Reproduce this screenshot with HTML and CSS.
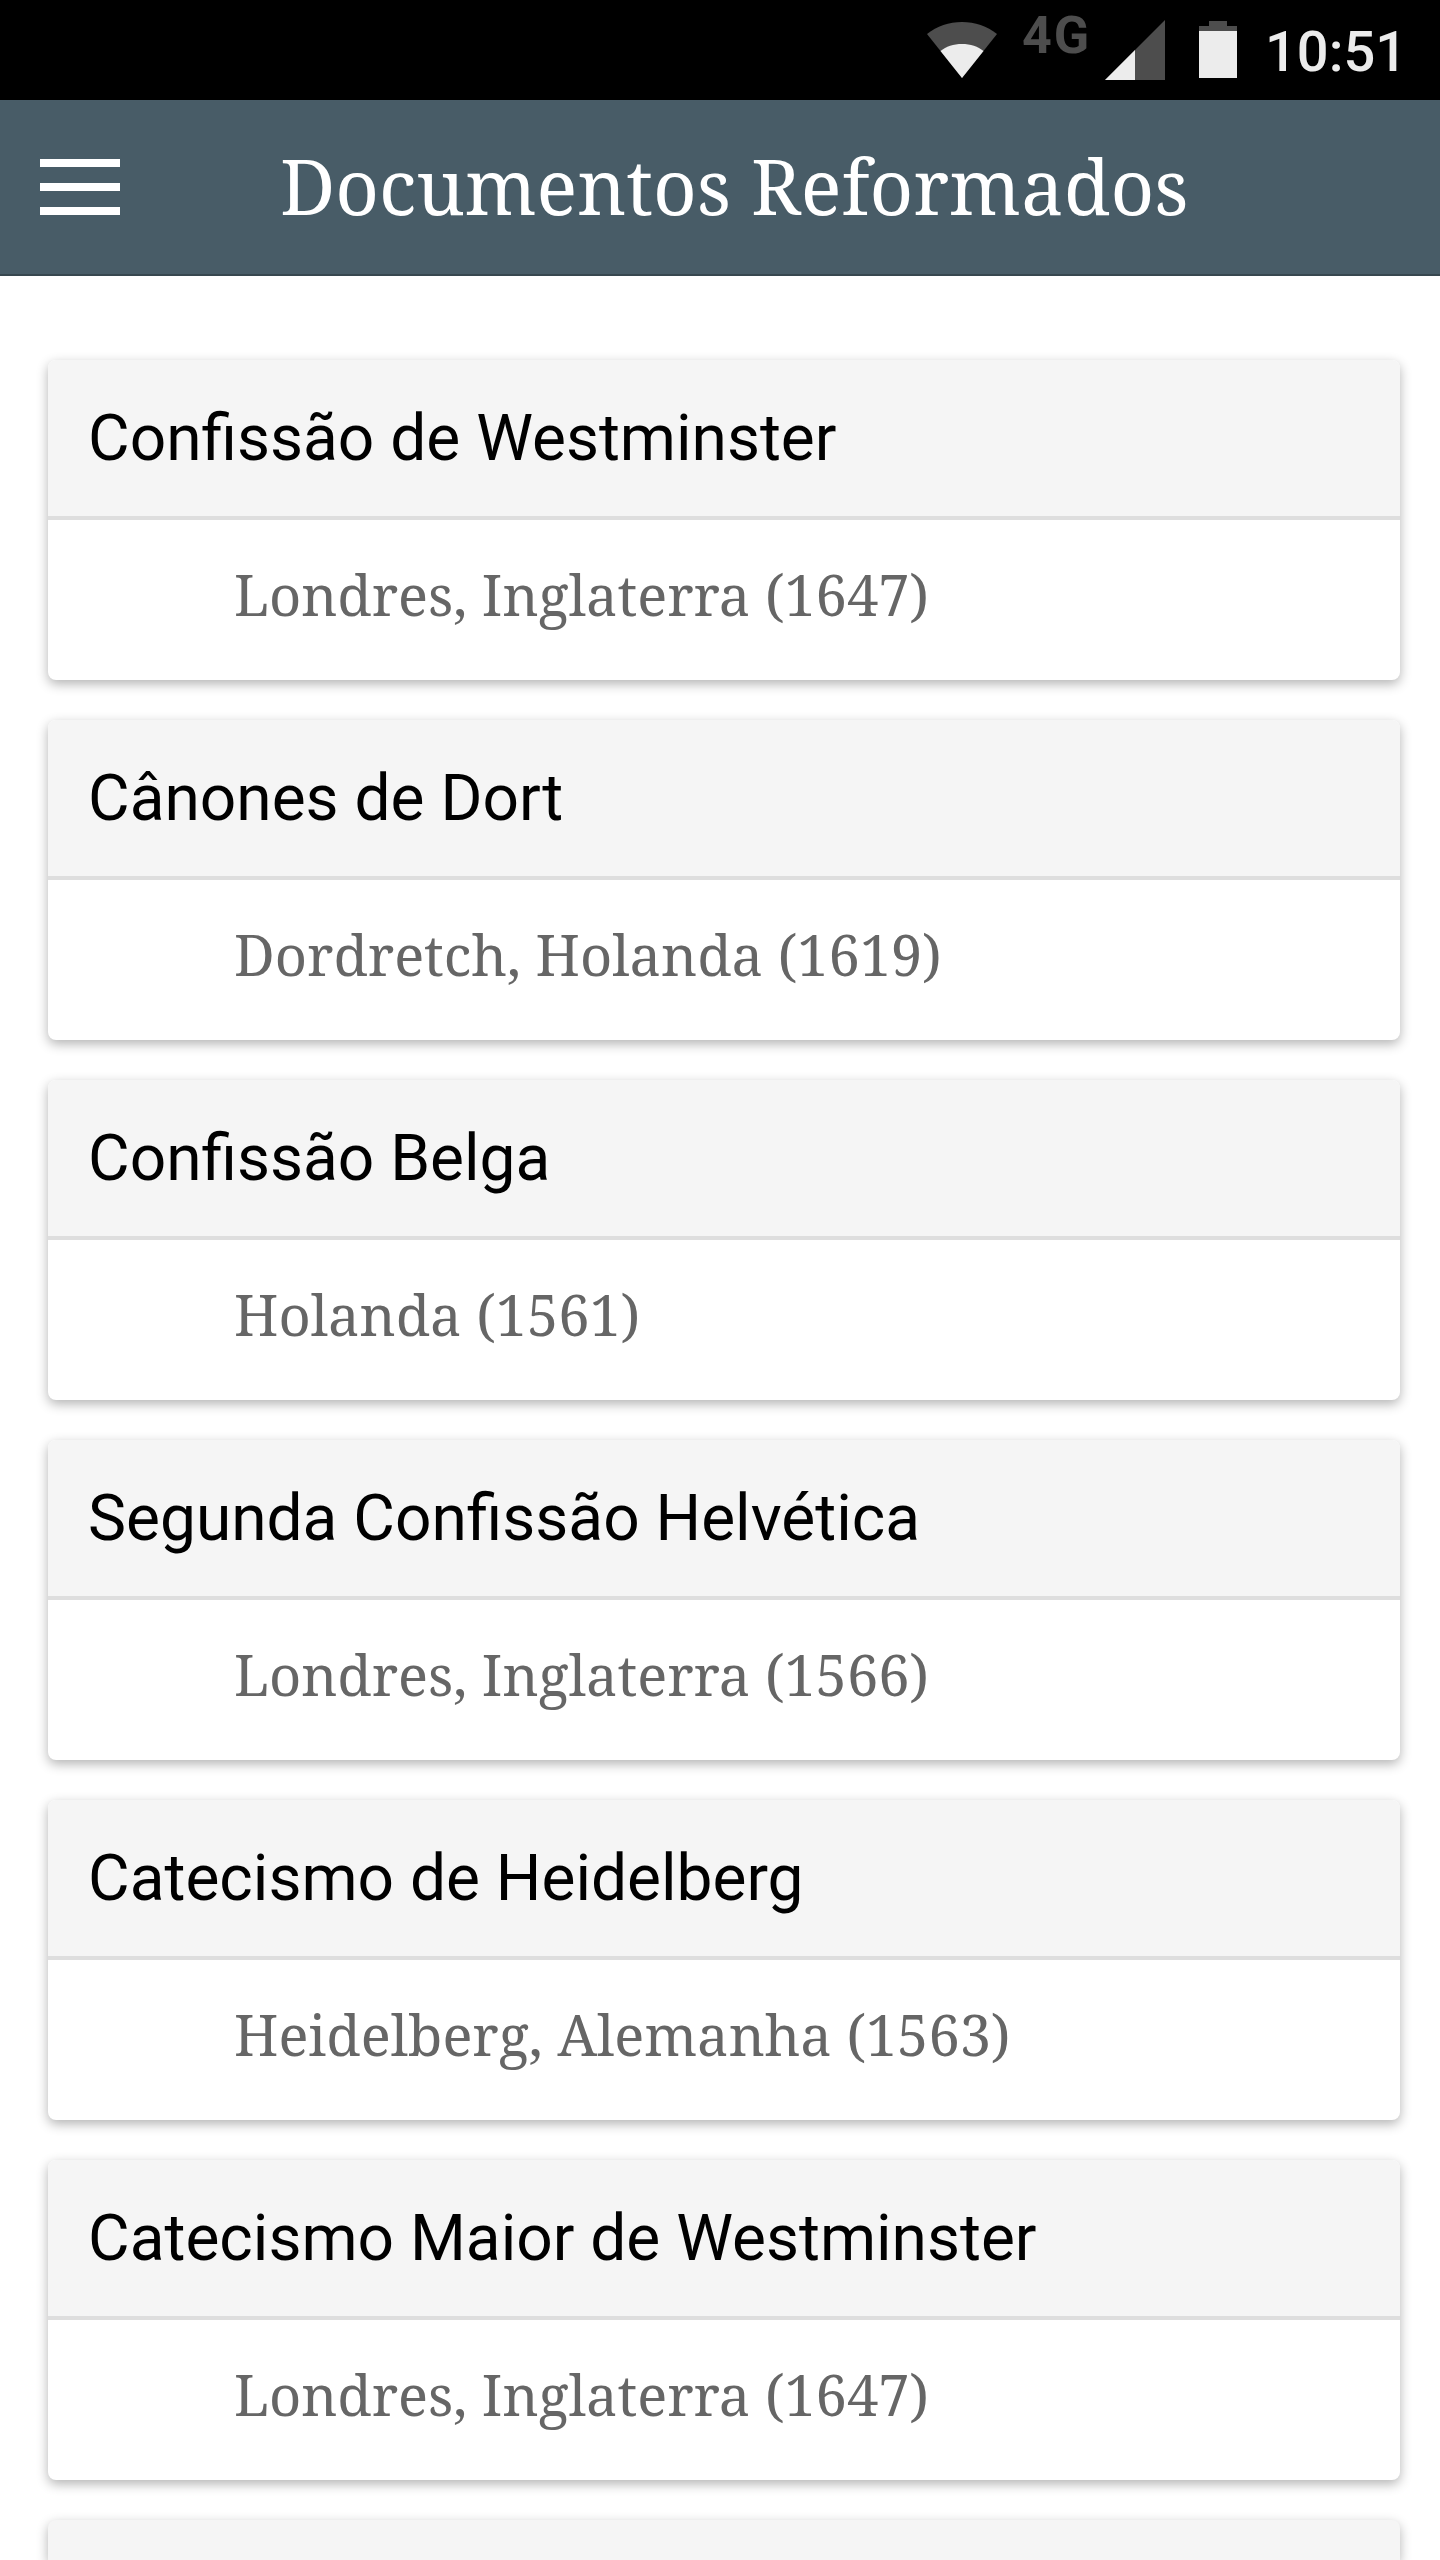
FILE: index.html
```html
<!DOCTYPE html>
<html lang="pt">
<head>
<meta charset="utf-8">
<title>Documentos Reformados</title>
<link rel="stylesheet" href="styles.css">
</head>
<body>
<div class="status-bar">
  <svg class="icon-wifi" width="70" height="56" viewBox="0 0 70 56"><path class="dim" d="M35 56 0 12C10 4 22 0 35 0s25 4 35 12z"/><path class="lit" d="M35 56 13.500 29C19 24.500 26.500 22 35 22s16 2.500 21.500 7z"/></svg>
  <span class="net">4G</span>
  <svg class="icon-signal" width="60" height="60" viewBox="0 0 60 60"><path class="dim" d="M60 0v60H0z"/><path class="lit" d="M30 30v30H0z"/></svg>
  <svg class="icon-battery" width="38" height="57" viewBox="0 0 38 57"><path class="dim" d="M10 0h18v5h10v5H0V5h10z"/><path class="lit" d="M0 10h38v47H0z"/></svg>
  <span class="clock">10:51</span>
</div>
<header class="app-bar">
  <button class="menu" aria-label="Menu"><span></span><span></span><span></span></button>
  <h1 class="app-title">Documentos Reformados</h1>
</header>
<main class="list">
  <article class="card"><h2 class="card-title">Confissão de Westminster</h2><p class="card-body">Londres, Inglaterra (1647)</p></article>
  <article class="card"><h2 class="card-title">Cânones de Dort</h2><p class="card-body">Dordretch, Holanda (1619)</p></article>
  <article class="card"><h2 class="card-title">Confissão Belga</h2><p class="card-body">Holanda (1561)</p></article>
  <article class="card"><h2 class="card-title">Segunda Confissão Helvética</h2><p class="card-body">Londres, Inglaterra (1566)</p></article>
  <article class="card"><h2 class="card-title">Catecismo de Heidelberg</h2><p class="card-body">Heidelberg, Alemanha (1563)</p></article>
  <article class="card"><h2 class="card-title">Catecismo Maior de Westminster</h2><p class="card-body">Londres, Inglaterra (1647)</p></article>
  <article class="card card-cut"></article>
</main>
</body>
</html>
```
FILE: styles.css
```css
* { box-sizing: border-box; }
html, body { margin: 0; height: 100%; overflow: hidden; background: #fff; }
.status-bar { height: 100px; background: #000; display: flex; align-items: flex-start; padding-left: 927px; }
.status-bar svg { flex: none; }
.dim { fill: #4d4d4d; }
.lit { fill: #ececec; }
.icon-wifi { margin-top: 22px; }
.net { margin: 11px 0 0 25px; width: 83px; font: 700 52px/50px Roboto, sans-serif; letter-spacing: 2px; color: #4d4d4d; }
.icon-signal { margin-top: 20px; }
.icon-battery { margin: 21px 0 0 34px; }
.clock { margin: 22px 0 0 28px; font: 500 56px/60px Roboto, sans-serif; color: #ececec; }
.app-bar { height: 176px; background: #485c67; border-bottom: 2px solid #37474f; display: flex; align-items: center; padding-left: 40px; }
.menu { width: 80px; height: 56px; padding: 0; border: 0; background: none; display: flex; flex-direction: column; justify-content: space-between; margin-right: 160px; }
.menu span { display: block; height: 8px; background: #fff; }
.app-title { margin: 0; padding-bottom: 2px; font: 400 76px/1 "Noto Serif", "DejaVu Serif", serif; color: #fff; }
.list { padding: 84px 40px 0 48px; }
.card { height: 320px; margin-bottom: 40px; border-radius: 8px; background: #fff; box-shadow: 0 4px 12px rgba(0,0,0,.3); overflow: hidden; }
.card-title { margin: 0; height: 160px; padding: 2px 0 0 40px; display: flex; align-items: center; background: #f5f5f5; border-bottom: 4px solid #dedede; font: 400 64px/1 Roboto, sans-serif; color: #000; }
.card-body { margin: 0; height: 160px; padding: 0 0 13px 186px; display: flex; align-items: center; font: 400 56px/1 "Noto Serif", "DejaVu Serif", serif; color: #666; }
.card-cut { height: 40px; margin-bottom: 0; border-radius: 8px 8px 0 0; background: #f5f5f5; }
```
